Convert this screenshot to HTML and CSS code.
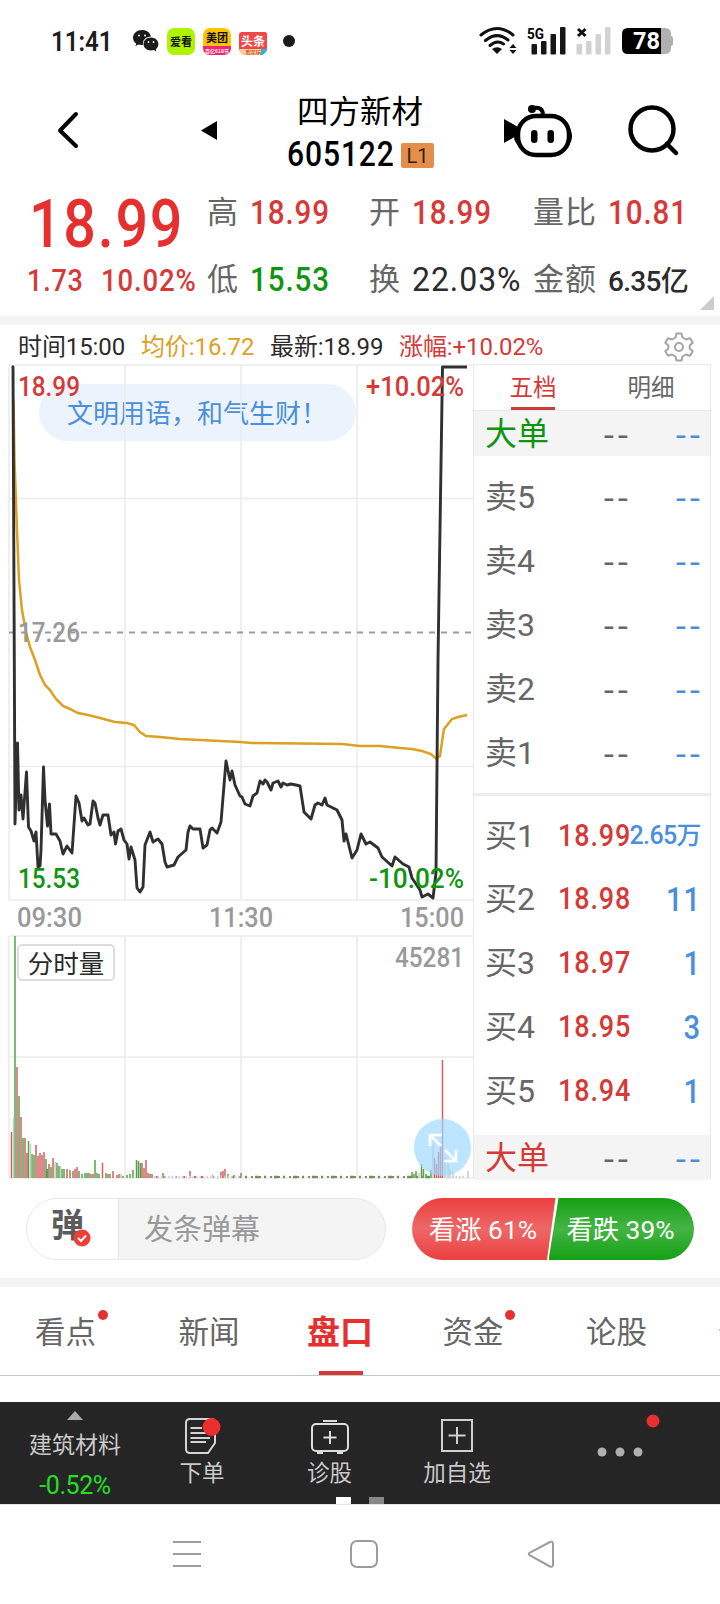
FILE: index.html
```html
<!DOCTYPE html>
<html lang="zh-CN">
<head>
<meta charset="utf-8">
<title>四方新材 605122</title>
<link rel="stylesheet" href="styles.css">
</head>
<body>
<div class="phone">
  <div class="status">
    <span class="clock"><span class="din">11:41</span></span>
    <svg class="wechat" width="26" height="23" viewBox="0 0 26 23"><path d="M9 0C4 0 0 3.500 0 7.700c0 2.400 1.200 4.400 3.200 5.800L2.500 16l3-1.500c1 .3 2.200.5 3.500.5h1c-.8-5 3-8.500 8-8.500C17.300 2.700 13.500 0 9 0z" fill="#1b1b1b"/><path d="M18 7.500c-4.200 0-7.500 2.900-7.500 6.500s3.300 6.500 7.500 6.500c1 0 2-.2 2.800-.4l2.600 1.400-.6-2.300c1.600-1.200 2.600-3 2.600-5.200 0-3.600-3.300-6.500-7.400-6.500z" fill="#1b1b1b"/><g fill="#fff"><circle cx="6" cy="5.500" r="1"/><circle cx="12" cy="5.500" r="1"/><circle cx="15.500" cy="12" r=".9"/><circle cx="20.500" cy="12" r=".9"/></g></svg>
    <div class="app app-lime"><b>爱看</b></div>
    <div class="app app-mt"><b>美团</b><i>百亿618节</i></div>
    <div class="app app-tt"><b>头条</b><i>看足球</i></div>
    <div class="more-dot"></div>
    <svg class="signals" width="195" height="28" viewBox="0 0 195 28">
      <g fill="none" stroke="#111" stroke-width="3" stroke-linecap="round"><path d="M2 8Q18-5 34 8M6.500 13.500Q18 4 29 13M11 18.500Q18 12.500 24.500 17"/></g>
      <path d="M13 22Q18 18.500 23 22L18 27z" fill="#111"/><path d="M30.500 21l3.500-4 3.500 4zM30.500 23l3.500 4 3.500-4z" fill="#111"/>
      <text x="48" y="11.500" class="net" textLength="17" lengthAdjust="spacingAndGlyphs">5G</text>
      <g fill="#161616"><rect x="52.500" y="17" width="5.500" height="10.500" rx="1"/><rect x="62" y="14" width="5.500" height="13.500" rx="1"/><rect x="71.500" y="7" width="5.500" height="20.500" rx="1"/><rect x="81" y="0" width="5.500" height="27.500" rx="1"/></g>
      <path d="M99 2l7.500 7M106.500 2L99 9" stroke="#111" stroke-width="3"/>
      <g fill="#d2d2d2"><rect x="97.500" y="17" width="5.500" height="10.500" rx="1"/><rect x="107" y="14" width="5.500" height="13.500" rx="1"/><rect x="116.500" y="7" width="5.500" height="20.500" rx="1"/><rect x="126" y="0" width="5.500" height="27.500" rx="1"/></g>
      <path d="M182 1h4q6 0 6 6v2q2 0 2 3v4q0 3-2 3v2q0 6-6 6h-4z" fill="#b0b0b0"/>
      <path d="M149 1h33v26h-33q-6 0-6-6V7q0-6 6-6z"/><text x="154" y="22" class="batt" textLength="27" lengthAdjust="spacingAndGlyphs">78</text>
    </svg>
  </div>

  <header class="header">
    <svg class="back" width="24" height="40" viewBox="0 0 24 40"><path d="M20 4L4 20.500 20 36" fill="none" stroke="#000" stroke-width="4" stroke-linecap="round" stroke-linejoin="round"/></svg>
    <svg class="prev" width="16" height="20" viewBox="0 0 16 20"><path d="M16 0v19L0 9.500z"/></svg>
    <div class="title">
      <div class="name">四方新材</div>
      <div class="code"><span><span class="din">605122</span></span><b>L1</b></div>
    </div>
    <svg class="robot" width="70" height="54" viewBox="0 0 70 54"><path d="M0 15v24l14-8V23z"/><rect x="14" y="12" width="51" height="39" rx="18" fill="#fff" stroke="#000" stroke-width="4.500"/><path d="M28 4q11-2 11 7" fill="none" stroke="#000" stroke-width="4"/><circle cx="28" cy="5" r="4"/><rect x="27" y="26" width="6.500" height="13" rx="3.200"/><rect x="43.500" y="26" width="6.500" height="13" rx="3.200"/><path d="M64 24q4 2 4 8t-4 9z"/><path d="M14 24q-4 2-4 8t4 9z"/></svg>
    <svg class="search" width="52" height="52" viewBox="0 0 52 52"><g fill="none" stroke="#000" stroke-width="4.500"><circle cx="24" cy="25" r="21.500"/><path d="M39 40l9 9" stroke-linecap="round"/></g></svg>
  </header>

  <section class="quote">
    <div class="price"><span class="din">18.99</span></div>
    <div class="delta red"><span class="din">1.73</span><span class="din">10.02%</span></div>
    <div class="stat s1"><label>高</label><span class="din red">18.99</span></div>
    <div class="stat s2"><label>开</label><span class="din red">18.99</span></div>
    <div class="stat s3"><label>量比</label><span class="din red">10.81</span></div>
    <div class="stat s4"><label>低</label><span class="din green">15.53</span></div>
    <div class="stat s5"><label>换</label><span class="din">22.03%</span></div>
    <div class="stat s6"><label>金额</label><span class="amount">6.35亿</span></div>
    <div class="corner"></div>
  </section>
  <div class="band"></div>

  <div class="ticker">
    <span class="t1">时间15:00</span><span class="t2">均价:16.72</span><span class="t3">最新:18.99</span><span class="t4">涨幅:+10.02%</span>
    <svg class="gear" width="30" height="30" viewBox="0 0 30 30"><g fill="none" stroke="#a5a5a5" stroke-width="2" stroke-linejoin="round"><path d="M12.500 1.500h5l1 4 3.500 2 4-1.200 2.700 4.400-3 2.800v3l3 2.800-2.700 4.400-4-1.200-3.500 2-1 4h-5l-1-4-3.500-2-4 1.200-2.700-4.400 3-2.800v-3l-3-2.800 2.700-4.400 4 1.200 3.500-2z"/><circle cx="15" cy="15" r="4"/></g></svg>
  </div>

  <main class="market">
    <div class="charts">
      <div class="notice">文明用语，和气生财！</div>
      <svg width="473" height="815" viewBox="0 364 473 815">
        <g fill="none" stroke="#ececec" stroke-width="1.600">
          <path d="M9 365H473M9 900H473M9 365V900M125 365V900M241 365V900M357 365V900M9 936H473M9 1178H473M9 936V1178M125 936V1178M241 936V1178M357 936V1178M9 1057H473M9 498.500H473M9 766.500H473"/>
        </g>
        <path d="M9 632.500H472" stroke="#9b9b9b" stroke-width="1.900" stroke-dasharray="6 6"/>
        <path d="M13.500 400L14.500 460 17 530 19 580 22 610 26 632 30 647 35 660 40 675 45 685 50 690 56 699 63 706 70 709 78 713 88 715 100 718 115 722 127 723 134 725 140 732 146 736 160 737 180 739 200 740 220 741 240 742 252 743 300 743.500 342 744 360 746 380 746 400 748 412 749 422 751 431 754 436 758.500 440 756 443 735 444 729 448 724 452 719 458 717 467 715" fill="none" stroke="#dda022" stroke-width="2.500"/>
        <path d="M12 366L13 367 14.300 660 15 824 17.500 743 19 810 21 795 23 819 26.500 772 28.500 827 31 831 34 841 36 832 38 867 40 866 41 850 43.500 767 45 800 47.500 826 49.500 804 51 834 56 834 60 841 63 854 67 846 72 853 76 796 79 803 82 821 84 818 88 825 90 824 93 801 95 803 98 818 100 825 103 815 108 815 111 835 114 832 115.500 844 118 831 121 829 124 840 127 844 129 859 131 847 135 860 137 888 140 892 143 887 145 845 150 832 153 842 158 839 162 844 165 862 167 867 174 865 178 857 186 850 188 832 190 826 193 829 200 829 203 848 207 845 210 830 212 828 217 833 221 822 226 761 230 780 232 771 235 785 240 796 242 797 245 804 250 806 253 796 257 793 260 781 263 784 265 780 267 782 271 790 273 783 278 781 281 787 283 783 287 785 291 784 296 785 300 786 304 812 311 819 315 805 318 803 322 805 325 798 327 805 337 810 342 820 344 841 346 834 352 858 357 850 361 834 366 844 370 842 378 848 382 857 392 866 395 857 403 864 409 867 412 878 420 890 422 897 428 894 433 898 436 873 438 660 442.500 367H467" fill="none" stroke="#303030" stroke-width="2.900" stroke-linejoin="round"/>
        <g fill="none" stroke-width="1.500">
          <path stroke="#cf6262" d="M11.500 1178V1132M17 1178V1067M21 1178V1117M25 1178V1138M27 1178V1153M36 1178V1145M38 1178V1156M40 1178V1153M42 1178V1155M44 1178V1152M49 1178V1164M53 1178V1158M67 1178V1169M73 1178V1171M75 1178V1169M77 1178V1167M91 1178V1174M93 1178V1174M102.500 1178V1163M108 1178V1174M113 1178V1171M117 1178V1175M119 1178V1174M142 1178V1163M144 1178V1168M146 1178V1160M148 1178V1173M150 1178V1174M190 1178V1171M221 1178V1172M223 1178V1171M225 1178V1169M442.500 1178V1060M434.500 1178V1158M436.500 1178V1164M438.500 1178V1152M440.500 1178V1146"/>
          <path stroke="#55a24c" d="M15 1178V936M19 1178V1096M23 1178V1138M28.500 1178V1141M32 1178V1154M34 1178V1155M46 1178V1159M47.500 1178V1169M51 1178V1167M57 1178V1163M59 1178V1166M62 1178V1169M64 1178V1169M70 1178V1170M79 1178V1171M82 1178V1174M85 1178V1173M87 1178V1173M89 1178V1173M95 1178V1160M97 1178V1173M99 1178V1174M106 1178V1173M110 1178V1174M123 1178V1176M127 1178V1175M130 1178V1174M133 1178V1170M136.500 1178V1160M138.500 1178V1161M140.500 1178V1163M152 1178V1174M163 1178V1173M228 1178V1174M234 1178V1175M241 1178V1173M412 1178V1172M414 1178V1174M416 1178V1171M421.500 1178V1164M423.500 1178V1169M426 1178V1174M431 1178V1170"/>
          <path stroke="#c3cec1" d="M13.500 1178V1118M30.500 1178V1144M55 1178V1162M60.500 1178V1166M121 1178V1174M212.500 1178V1174M419 1178V1173M433 1178V1145M445 1178V1157M448 1178V1164M450 1178V1169M453 1178V1172M468 1178V1171"/>
          <path stroke="#c76a67" stroke-dasharray="2 5 3 9" d="M156 1177H430" stroke-width="2"/>
          <path stroke="#5a9d55" stroke-dasharray="2 8 4 5" d="M245 1177H430" stroke-width="2.500"/>
          <path stroke="#d4d4d4" stroke-dasharray="1.500 2" d="M154 1177H242M445 1177H465" stroke-width="2.500"/>
        </g>
        <g class="chart-text">
          <text x="18" y="396" class="red" textLength="62" lengthAdjust="spacingAndGlyphs">18.99</text>
          <text x="366" y="396" class="red" textLength="98" lengthAdjust="spacingAndGlyphs">+10.02%</text>
          <text x="18" y="642" textLength="62" lengthAdjust="spacingAndGlyphs">17.26</text>
          <text x="18" y="888" class="green" textLength="62" lengthAdjust="spacingAndGlyphs">15.53</text>
          <text x="369" y="888" class="green" textLength="95" lengthAdjust="spacingAndGlyphs">-10.02%</text>
          <text x="17" y="927" textLength="65" lengthAdjust="spacingAndGlyphs">09:30</text>
          <text x="209" y="927" textLength="64" lengthAdjust="spacingAndGlyphs">11:30</text>
          <text x="400" y="927" textLength="64" lengthAdjust="spacingAndGlyphs">15:00</text>
          <text x="395" y="967" textLength="69" lengthAdjust="spacingAndGlyphs">45281</text>
        </g>
      </svg>
      <div class="vol-label">分时量</div>
      <svg class="expand" width="57" height="57" viewBox="0 0 57 57"><circle cx="28.500" cy="28.500" r="28.500" fill="#9fd8ff" fill-opacity=".68"/><path d="M16 27V16H28M17 17L27 27M42 31V42H30M41 41L31 31" fill="none" stroke="#fff" stroke-width="2.600"/></svg>
    </div>
    <aside class="book">
      <div class="book-tabs"><span class="on">五档</span><span>明细</span></div>
      <div class="row big"><span class="green">大单</span><i>--</i><em>--</em></div>
      <div class="sell">
        <div class="row"><span>卖5</span><i>--</i><em>--</em></div>
        <div class="row"><span>卖4</span><i>--</i><em>--</em></div>
        <div class="row"><span>卖3</span><i>--</i><em>--</em></div>
        <div class="row"><span>卖2</span><i>--</i><em>--</em></div>
        <div class="row"><span>卖1</span><i>--</i><em>--</em></div>
      </div>
      <div class="buy">
        <div class="row"><span>买1</span><b>18.99</b><strong class="small">2.65万</strong></div>
        <div class="row"><span>买2</span><b>18.98</b><strong>11</strong></div>
        <div class="row"><span>买3</span><b>18.97</b><strong>1</strong></div>
        <div class="row"><span>买4</span><b>18.95</b><strong>3</strong></div>
        <div class="row"><span>买5</span><b>18.94</b><strong>1</strong></div>
      </div>
      <div class="row big"><span class="red">大单</span><i>--</i><em>--</em></div>
    </aside>
  </main>

  <section class="barrage">
    <div class="say">
      <div class="say-icon">弹<svg width="18" height="18" viewBox="0 0 18 18"><circle cx="9" cy="9" r="8.500" fill="#ee3f34"/><path d="M5 9l3 3 5-5.500" fill="none" stroke="#fff" stroke-width="2"/></svg></div>
      <div class="say-text">发条弹幕</div>
    </div>
    <div class="vote"><div class="up">看涨 61%</div><div class="down">看跌 39%</div></div>
  </section>
  <div class="band"></div>

  <nav class="tabs">
    <span class="dot">看点</span><span>新闻</span><span class="active">盘口</span><span class="dot">资金</span><span>论股</span><span>公告</span>
  </nav>

  <div class="gap"></div>
  <nav class="toolbar">
    <div class="sector"><i></i><span>建筑材料</span><b>-0.52%</b></div>
    <div class="tool"><svg width="36" height="38" viewBox="0 0 36 38"><g fill="none" stroke="#d4d4d4" stroke-width="2"><path d="M6 3H27q4 0 4 4V27L24 37H6q-4 0-4-4V7q0-4 4-4z"/><path d="M6.500 12H18M6.500 17H26M6.500 22H26M6.500 26H22"/></g><circle cx="27.500" cy="11" r="9" fill="#e92f2f"/></svg><span>下单</span></div>
    <div class="tool"><svg width="40" height="38" viewBox="0 0 40 38"><g fill="none" stroke="#dcdcdc" stroke-width="2"><rect x="2" y="8" width="36" height="27" rx="4"/><path d="M13 5H27M20 15v13M13.500 21.500h13M7 37h6M27 37h6"/></g></svg><span>诊股</span></div>
    <div class="tool"><svg width="34" height="38" viewBox="0 0 34 38"><g fill="none" stroke="#cfcfcf" stroke-width="2"><rect x="2" y="4" width="30" height="31"/><path d="M17 11v17M8.500 19.500h17"/></g></svg><span>加自选</span></div>
    <svg class="dots" width="70" height="50" viewBox="0 0 70 50"><g fill="#b0b0b0"><circle cx="12" cy="41" r="4.500"/><circle cx="30" cy="41" r="4.500"/><circle cx="48" cy="41" r="4.500"/></g><circle cx="63" cy="10" r="6.500" fill="#e92f2f"/></svg>
    <div class="pages"><i></i><i></i></div>
  </nav>
  <footer class="sysnav">
    <svg width="28" height="30" viewBox="0 0 28 30"><path d="M0 3H28M0 15H28M0 27H28" stroke="#9c9c9c" stroke-width="2.200"/></svg>
    <svg width="28" height="30" viewBox="0 0 28 30"><rect x="1" y="2" width="26" height="26" rx="6" fill="none" stroke="#9c9c9c" stroke-width="2"/></svg>
    <svg width="28" height="30" viewBox="0 0 28 30"><path d="M23 3L3 13.500q-2.500 1.500 0 3L23 27.500q3 1 3-2V5q0-3-3-2z" fill="none" stroke="#9c9c9c" stroke-width="2"/></svg>
  </footer>
</div>
</body>
</html>
```
FILE: styles.css
```css
* { box-sizing: border-box; }
body { margin: 0; background: #fff; font-family: Roboto, "Noto Sans CJK SC", sans-serif; color: #2b2b2b; }
svg { display: block; flex: none; overflow: visible; }
i, em { font-style: normal; }
.phone { width: 720px; height: 1604px; overflow: hidden; background: #fff; white-space: nowrap; }
.red { color: #d63a38; fill: #d63a38; }
.green { color: #0f950f; fill: #0f950f; }
/* narrow, open-spaced numerals */
.din { display: inline-block; transform: scaleX(.87); transform-origin: 0 50%; letter-spacing: .03em; }

.status { display: flex; align-items: center; height: 82px; padding-left: 51px; }
.clock { width: 82px; font-size: 28px; font-weight: 600; color: #1b1b1b; }
.clock .din { transform: scaleX(.86); letter-spacing: 0; }
.wechat { margin-right: 8px; }
.app { width: 28px; height: 27px; margin-right: 8px; border-radius: 7px; overflow: hidden; text-align: center; color: #111; font-family: "Noto Sans CJK SC", sans-serif; }
.app b { display: block; font-size: 11px; line-height: 18px; }
.app i { display: block; font-size: 5px; line-height: 9px; height: 9px; background: #ee2673; color: #fff; font-weight: 700; }
.app-lime { background: #aef300; }
.app-lime b { line-height: 27px; }
.app-mt { background: #ffc400; }
.app-tt { background: #f04848; color: #fff; height: 23px; margin-top: 4px; border-radius: 3px 2px 7px 7px; }
.app-tt b { font-size: 12px; line-height: 17px; }
.app-tt i { height: 6px; line-height: 6px; background: linear-gradient(105deg, #ffd39a 75%, #26b9dd 75%); color: #e05030; }
.more-dot { width: 12px; height: 12px; margin-left: 8px; border-radius: 50%; background: #1b1b1b; }
.signals { margin-left: 184px; }
.net { font-size: 15px; font-weight: 700; }
.batt { font-size: 23px; font-weight: 700; fill: #fff; }

.header { display: grid; grid-template-columns: 201px 81px 222px 121px 1fr; height: 106px; }
.back { margin: 28px 0 0 56px; }
.prev { margin-top: 39px; }
.title { padding: 11px 0 0 5px; color: #000; }
.name { padding-left: 10px; font-size: 31.500px; line-height: 39px; height: 39px; }
.code { display: flex; align-items: center; height: 44px; }
.code > span { width: 114px; font-size: 34.500px; font-weight: 500; line-height: 44px; }
.code b { width: 33px; height: 25px; margin: 2px 0 0; border-radius: 2px; background: #e38f4b; font-size: 20px; font-weight: 400; line-height: 26px; text-align: center; color: #3a1c08; }
.robot { margin-top: 22px; }
.search { margin: 22px 0 0 3px; }

.quote { position: relative; display: grid; grid-template: 67px 60px / 208px 162px 163px 1fr; grid-template-areas: "p a b c" "d e f g"; height: 128px; }
.price { grid-area: p; padding-left: 29px; font-size: 66px; font-weight: 500; line-height: 74px; color: #e63030; }
.delta { grid-area: d; display: grid; grid-template-columns: 74px 1fr; padding-left: 27px; font-size: 31px; font-weight: 500; line-height: 51px; }
.delta .din + .din { transform: scaleX(.89); }
.stat { display: flex; font-size: 34px; font-weight: 500; line-height: 49px; }
.stat label { flex: none; margin-right: 12px; font-size: 31px; font-weight: 400; line-height: 50px; color: #666; }
.s1 { grid-area: a; } .s2 { grid-area: b; } .s3 { grid-area: c; } .s4 { grid-area: e; } .s5 { grid-area: f; } .s6 { grid-area: g; }
.s3 label, .s6 label { margin-right: 11px; letter-spacing: 1px; }
.s1 label, .s2 label, .s4 label, .s5 label { margin-left: -1px; }
.s5 { font-weight: 400; }
.s5 .din { transform: scaleX(.94); }
.stat .amount { font-size: 28px; letter-spacing: -.7px; line-height: 54px; }
.corner { position: absolute; right: 6px; bottom: 6px; border: 7px solid #ccc; border-top-color: transparent; border-left-color: transparent; }
.band { height: 9px; background: #f4f4f4; }

.ticker { display: grid; grid-template-columns: 123px 129px 129px 265px 1fr; align-items: center; height: 39px; padding: 2px 0 0 18px; font-size: 24px; line-height: 37px; letter-spacing: -.1px; }
.ticker span { padding-top: 2px; }
.t2 { color: #dda022; } .t4 { color: #d63a38; }

.market { display: flex; height: 815px; }
.charts { position: relative; isolation: isolate; width: 473px; }
.chart-text { font-size: 27px; font-weight: 500; fill: #999; }
.notice { position: absolute; z-index: -1; left: 39px; top: 20px; width: 317px; height: 57px; border-radius: 29px; padding-left: 28px; background: #edf3fd; color: #4a8fdc; font-size: 26px; line-height: 60px; }
.vol-label { position: absolute; left: 17px; top: 580px; width: 98px; height: 37px; border: 2px solid #ddd; border-radius: 5px; background: #fff; font-size: 25.500px; line-height: 37px; text-align: center; }
.expand { position: absolute; left: 414px; top: 755px; }
.book { width: 238px; border: 1px solid #e8e8e8; }
.book-tabs { display: flex; height: 46px; border-bottom: 1px solid #e8e8e8; font-size: 23.500px; line-height: 46px; color: #666; }
.book-tabs span { flex: 1; text-align: center; }
.book-tabs .on { color: #d63a38; background: linear-gradient(#c93d3c, #c93d3c) 50% 100% / 44px 3px no-repeat; }
.row { display: grid; grid-template-columns: 73px 73px 1fr; align-items: center; height: 64px; padding: 0 9px 0 11px; color: #666; font-size: 32px; line-height: 62px; }
.row i, .row em { font-family: "Liberation Sans", sans-serif; font-size: 34px; font-weight: 700; letter-spacing: 2.500px; text-align: right; transform: translateY(1px) scaleY(.6); }
.row em { color: #4a8fdc; margin-right: -2px; }
.big { height: 45px; background: #f4f4f4; line-height: 40px; }
.sell { height: 340px; padding-top: 9px; border-bottom: 3px solid #ececec; }
.buy { height: 339px; padding-top: 7px; }
.row b { font-size: 31px; font-weight: 500; letter-spacing: 1px; transform: scaleX(.87); transform-origin: 0 50%; color: #d63a38; }
.row strong { font-size: 34px; font-weight: 500; letter-spacing: 1px; transform: scaleX(.86); transform-origin: 100% 50%; color: #4a8fdc; text-align: right; }
.row .small { margin-left: -10px; font-size: 25px; letter-spacing: -.6px; line-height: 65px; transform: none; }

.barrage { display: flex; justify-content: space-between; height: 99px; padding: 19px 26px 0; }
.say { display: flex; width: 360px; height: 62px; border: 1px solid #e8e8e8; border-radius: 31px; background: #f4f4f4; overflow: hidden; }
.say-icon { position: relative; width: 92px; padding-left: 24px; border-right: 1px solid #e5e5e5; background: #fff; font-size: 33px; font-weight: 700; line-height: 54px; color: #5b5b5b; }
.say-icon svg { position: absolute; left: 46px; top: 30px; }
.say-text { padding-left: 25px; font-size: 29px; line-height: 62px; color: #999; }
.vote { display: flex; width: 282px; height: 62px; border-radius: 31px; overflow: hidden; color: #fff; font-size: 26.300px; line-height: 64px; }
.up { width: 145px; padding-left: 17px; background: linear-gradient(#eb3f3f, #ee6868 50%, #eb3f3f); clip-path: polygon(0 0, 100% 0, 135px 100%, 0 100%); }
.down { width: 147px; margin-left: -7px; padding-left: 18px; background: linear-gradient(#14a014, #45b445 50%, #14a014); clip-path: polygon(10px 0, 100% 0, 100% 100%, 0 100%); }

.tabs { display: grid; grid-template-columns: repeat(5, 136.500px) 62px; width: 760px; height: 89px; border-bottom: 1px solid #c8c8c8; font-size: 30.500px; line-height: 91px; color: #666; }
.tabs span { position: relative; height: 88px; padding-left: 35px; }
.tabs span:nth-child(2) { padding-left: 42px; }
.tabs span:nth-child(4) { padding-left: 33px; }
.tabs span:nth-child(5) { padding-left: 40px; }
.tabs span.active { padding-left: 34px; font-size: 33px; font-weight: 700; color: #e62f2f; }
.active::after { content: ""; position: absolute; left: 46px; bottom: 0; width: 44px; height: 4px; background: #d63a38; }
.dot::after { content: ""; position: absolute; left: 98px; top: 23px; width: 10px; height: 10px; border-radius: 50%; background: #e62f2f; }
.dot:nth-child(4)::after { left: 95px; }
.gap { height: 26px; }

.toolbar { position: relative; display: grid; grid-template-columns: 148px 108px 147px 108px 1fr; height: 102px; background: #252525; color: #c9c9c9; }
.sector { display: flex; flex-direction: column; align-items: center; padding: 9px 0 0 2px; font-size: 23px; }
.sector i { border: solid transparent; border-width: 0 8px 9px; border-bottom-color: #aaa; }
.sector span { margin-top: 9px; line-height: 34px; }
.sector b { margin-top: 6px; color: #22e022; font-size: 25px; font-weight: 400; line-height: 34px; letter-spacing: -.4px; }
.tool { display: flex; flex-direction: column; align-items: center; padding-top: 14px; font-size: 22.500px; }
.tool span { line-height: 39px; }
.dots { margin: 9px 0 0 79px; }
.pages { position: absolute; left: 336px; bottom: 0; display: flex; gap: 18px; }
.pages i { width: 15px; height: 7px; background: #fff; }
.pages i + i { background: #888; }
.sysnav { display: flex; gap: 149px; height: 100px; padding: 34px 0 0 173px; border-top: 1px solid #e3e3e3; }
```
